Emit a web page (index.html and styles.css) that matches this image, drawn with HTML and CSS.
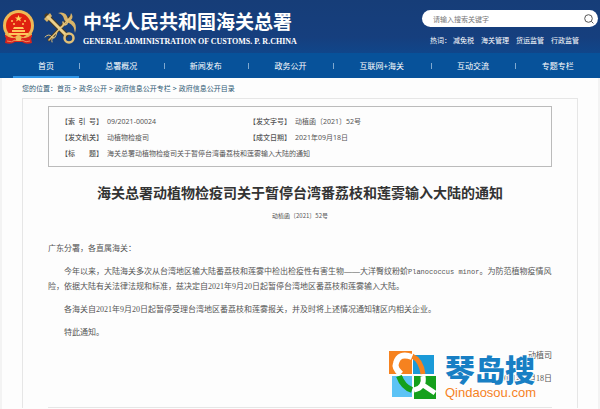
FILE: index.html
```
<!DOCTYPE html>
<html lang="zh-CN">
<head>
    <meta charset="UTF-8">
    <meta name="viewport" content="width=device-width, initial-scale=1.0">
    <title>海关总署动植物检疫司关于暂停台湾番荔枝和莲雾输入大陆的通知</title>
    <link rel="stylesheet" href="styles.css">
</head>
<body>
    <header class="header">
        <div class="brand">
            <svg class="emblem" viewBox="0 0 33 35" aria-hidden="true">
                <path d="M5 23L3 33Q9 35 13 32L20 32Q24 35 30 33L28 23Z" fill="#d9241c"/>
                <circle cx="16.5" cy="15.500" r="15.500" fill="#efb955"/>
                <circle cx="16.5" cy="15.500" r="12.500" fill="#e0210f"/>
                <path d="M16.500 5l1 2.400h2.600l-2 1.600.8 2.500-2.400-1.500-2.400 1.500.8-2.500-2-1.600h2.600z" fill="#ffd65c"/>
                <g fill="#ffc65c">
                    <circle cx="10" cy="11" r="1"/><circle cx="23" cy="11" r="1"/>
                    <circle cx="12" cy="14" r="1"/><circle cx="21" cy="14" r="1"/>
                    <path d="M12 17h9l1 2H11zM10 20h13v2H10zM7 23h19v2H7z"/>
                </g>
                <path d="M3 24q7 6 13 2 7 4 14-2l0 3q-4 4-10 3h-7Q7 31 3 27z" fill="#d9241c"/>
                <path d="M3 24q6 5 11 3M30 24q-6 5-11 3" fill="none" stroke="#efb955"/>
                <circle cx="16.5" cy="28" r="3" fill="#efb955"/>
                <path d="M5 31q5 2 8-1M20 30q4 3 8 1" fill="none" stroke="#ee8a5d"/>
            </svg>
            <svg class="keys" viewBox="0 0 34 34" aria-hidden="true">
                <g fill="none" stroke="#4a3b22" stroke-linecap="round">
                    <path d="M4 5L23 24" stroke-width="5"/>
                    <path d="M6 29L27 6" stroke-width="3"/>
                </g>
                <g fill="#d9b468">
                    <path d="M1 8L7 2l2 3-5 6z"/>
                    <path d="M15 2q8-2 10 6 3-3 3-6 3 4 0 7 7 3 4 13-1-8-6-10-4-1-5-4-1-5-6-6z"/>
                </g>
                <g fill="none" stroke="#e2c077" stroke-linecap="round">
                    <path d="M6 29L26 8" stroke-width="1.500"/>
                    <path d="M2 26q4-4 7 0t5-5M9 31q-1-4 2-5"/>
                    <path d="M16 17q6-1 4-6M20 14q6 0 4-5" stroke-width="1.500"/>
                    <path d="M5 6L22 23" stroke="#ecd08c" stroke-width="3"/>
                    <circle cx="26" cy="27" r="4.500" stroke-width="2.500"/>
                </g>
            </svg>
            <div class="brand-text">
                <div class="brand-cn">中华人民共和国海关总署</div>
                <div class="brand-en">GENERAL ADMINISTRATION OF CUSTOMS. P. R.CHINA</div>
            </div>
        </div>
        <div class="search">
            <form class="search-box">
                <input type="text" class="search-input" placeholder="请输入搜索关键字" aria-label="搜索关键字">
                <button type="button" class="search-btn" aria-label="搜索">
                    <svg viewBox="0 0 10 10" aria-hidden="true"><circle cx="4.500" cy="4.500" r="3.800"/><path d="M7.300 7.300L9.400 9.400"/></svg>
                </button>
            </form>
            <div class="hot">
                <span>热词：</span>
                <a href="#">减免税</a>
                <a href="#">海关管理</a>
                <a href="#">货运监管</a>
                <a href="#">行政监管</a>
            </div>
        </div>
    </header>
    <nav class="nav">
        <a href="#" class="home">首页</a>
        <a href="#">总署概况</a>
        <a href="#">新闻发布</a>
        <a href="#">政务公开</a>
        <a href="#" class="wide">互联网+海关</a>
        <a href="#">互动交流</a>
        <a href="#">专题专栏</a>
    </nav>
    <main class="page">
        <div class="crumbs">
            <div>您的位置：<a href="#">首页</a></div>
            <span>&gt;</span>
            <a href="#">政务公开</a>
            <span>&gt;</span>
            <a href="#">政府信息公开专栏</a>
            <span>&gt;</span>
            <a href="#">政府信息公开目录</a>
        </div>
        <article class="content">
            <table class="info">
                <colgroup>
                    <col class="col-label">
                    <col class="col-value">
                    <col class="col-label">
                    <col>
                </colgroup>
                <tr>
                    <th><div class="label"><span>【索</span><span>引</span><span>号】</span></div></th>
                    <td>09/2021-00024</td>
                    <th><div class="label">【发文字号】</div></th>
                    <td>动植函〔2021〕52号</td>
                </tr>
                <tr>
                    <th><div class="label">【发文机关】</div></th>
                    <td>动植物检疫司</td>
                    <th><div class="label">【成文日期】</div></th>
                    <td>2021年09月18日</td>
                </tr>
                <tr>
                    <th><div class="label"><span>【标</span><span>题】</span></div></th>
                    <td colspan="3">海关总署动植物检疫司关于暂停台湾番荔枝和莲雾输入大陆的通知</td>
                </tr>
            </table>
            <h1>海关总署动植物检疫司关于暂停台湾番荔枝和莲雾输入大陆的通知</h1>
            <div class="doc-no">动植函〔2021〕52号</div>
            <div class="text">
                <p class="to">广东分署，各直属海关：</p>
                <p>今年以来，大陆海关多次从台湾地区输大陆番荔枝和莲雾中检出检疫性有害生物——大洋臀纹粉蚧<span class="latin">Planococcus minor</span>。为防范植物疫情风险，依据大陆有关法律法规和标准，兹决定自2021年9月20日起暂停台湾地区番荔枝和莲雾输入大陆。</p>
                <p>各海关自2021年9月20日起暂停受理台湾地区番荔枝和莲雾报关，并及时将上述情况通知辖区内相关企业。</p>
                <p>特此通知。</p>
            </div>
            <div class="sign">
                <p>动植司</p>
                <p>2021年9月18日</p>
                <div class="watermark">
                    <svg viewBox="0 0 48 49" aria-hidden="true">
                        <path d="M0 0h23v23H0z" fill="#f6821f"/>
                        <path d="M24 4h21v19H24z" fill="#1b9ad8"/>
                        <path d="M3 25h20v21H3z" fill="#5cc3f5"/>
                        <path d="M25 25h22v23H25z" fill="#15a01c"/>
                        <path d="M23 5Q32 9 34 23" fill="none" stroke="#f6821f" stroke-width="5"/>
                        <path d="M23 6Q10 1 7 12Q5 17 12 23" fill="none" stroke="#fff" stroke-width="6"/>
                        <path d="M10 25Q14 36 23 39" fill="none" stroke="#15a01c" stroke-width="6"/>
                        <path d="M34 25Q36 37 25 39M34 34L46 42" fill="none" stroke="#fff" stroke-width="5"/>
                    </svg>
                    <div class="watermark-text">
                        <div class="watermark-cn">琴岛搜</div>
                        <div class="watermark-en">Qindaosou.com</div>
                    </div>
                </div>
            </div>
        </article>
    </main>
</body>
</html>
```
FILE: styles.css
```
* {
    box-sizing: border-box;
}
body {
    margin: 0;
    font-family: "Noto Sans CJK SC", sans-serif;
    font-size: 7px;
    color: #555;
    background: #f3f3f3;
}
a {
    color: inherit;
    text-decoration: none;
}
.header {
    display: flex;
    justify-content: space-between;
    height: 53px;
    padding: 10px 2px 0 2px;
    color: #fff;
    background: linear-gradient(#163d78 0%, #163f7e 70%, #10468a 100%);
}
.brand {
    display: flex;
}
.emblem {
    width: 33px;
    height: 35px;
}
.keys {
    width: 34px;
    height: 34px;
    margin: 1px 6px 0 8px;
}
.brand-cn {
    font-size: 19px;
    line-height: 22px;
    font-weight: bold;
}
.brand-en {
    font-family: "Liberation Serif", serif;
    font-size: 8px;
    line-height: 20px;
    font-weight: bold;
}
.search {
    width: 176px;
}
.search-box {
    display: flex;
    align-items: center;
    height: 17px;
    padding: 0 4px 0 11px;
    background: #fff;
    border-radius: 9px;
}
.search-input {
    flex: 1;
    min-width: 0;
    padding: 0;
    border: none;
    outline: none;
    background: none;
    font-family: inherit;
    font-size: 7px;
}
.search-input::placeholder {
    color: #777;
}
.search-btn {
    display: flex;
    padding: 0;
    border: none;
    background: none;
}
.search-btn svg {
    width: 10px;
    height: 10px;
    fill: none;
    stroke: #555;
}
.hot {
    display: flex;
    gap: 7px;
    padding: 7px 0 0 8px;
    line-height: 12px;
}
.hot span {
    margin-right: -5px;
}
.nav {
    display: flex;
    height: 25px;
    padding-left: 13px;
    color: #fff;
    background: #07529a;
    font-size: 8px;
}
.nav a {
    flex: 85;
    display: flex;
    justify-content: center;
    align-items: center;
    position: relative;
}
.nav .home {
    flex: 66;
    box-shadow: inset 0 -2px #2f95e6;
}
.nav .wide {
    flex: 98;
}
.nav a + a::before {
    content: "";
    position: absolute;
    left: 0;
    width: 1px;
    height: 6px;
    background: #7fa9d0;
}
.page {
    margin: 0 2px;
    padding: 0 20px 1px;
    background: #fdfdfd;
}
.crumbs {
    display: flex;
    gap: 2px;
    padding: 4px 0;
    line-height: 12px;
    color: #2f5a74;
}
.content {
    border: 1px solid #e6e6e6;
    border-bottom: none;
    padding: 7px 25px 0;
}
.info {
    width: 100%;
    border: 1px solid #bbb;
    border-spacing: 0;
    padding: 7px 12px 4px;
    table-layout: fixed;
}
.col-label {
    width: 46px;
}
.col-value {
    width: 142px;
}
.info th,
.info td {
    height: 16px;
    padding: 0;
    font-family: "Noto Sans", "Noto Sans CJK SC", sans-serif;
    line-height: 16px;
    font-weight: normal;
    text-align: left;
    white-space: nowrap;
}
.info th {
    font-weight: 500;
}
.label {
    display: flex;
    justify-content: space-between;
    width: 42px;
}
h1 {
    margin: 15px 0 0;
    font-size: 14px;
    line-height: 20px;
    font-weight: bold;
    color: #333;
    text-align: center;
}
.doc-no {
    margin-top: 9px;
    font-size: 6px;
    line-height: 10px;
    text-align: center;
}
.text,
.sign {
    font-family: "Liberation Serif", "Noto Sans CJK SC", serif;
    font-size: 8px;
    line-height: 15px;
}
.text {
    margin-top: 20px;
}
.text p,
.sign p {
    margin: 0 0 8px;
}
.text p {
    text-indent: 16px;
}
.text .to {
    text-indent: 0;
}
.latin {
    font-family: "Liberation Mono", monospace;
    font-size: 7px;
    line-height: 1;
}
.sign {
    position: relative;
    padding-bottom: 13px;
    border-bottom: 1px solid #e6e6e6;
    text-align: right;
}
.watermark {
    position: absolute;
    right: 16px;
    bottom: 7px;
    display: flex;
    gap: 8px;
    text-align: left;
}
.watermark svg {
    width: 48px;
    height: 49px;
}
.watermark-cn {
    font-family: "Noto Sans CJK SC", sans-serif;
    font-size: 30px;
    line-height: 34px;
    font-weight: 900;
    color: #187fc4;
    -webkit-text-stroke: 2px #fff;
    paint-order: stroke fill;
}
.watermark-en {
    font-family: "Liberation Sans", sans-serif;
    font-size: 13px;
    line-height: 15px;
    color: #f6821f;
}
```
